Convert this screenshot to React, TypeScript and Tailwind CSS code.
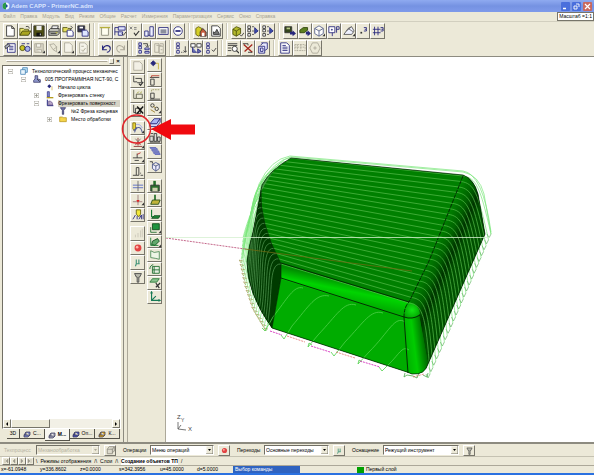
import React from 'react';

const NAVY = '#27277c';
const K = '#333333';
const GREY = '#aca899';

// 14x14 toolbar glyphs
const icons: Record<string, React.ReactNode> = {
  blank: <path d="M3 1h6l3 3v9H3zM9 1v3h3" fill="#fff" stroke={K} />,
  open: <><path d="M1 12V4h4l1 1h5v2" fill="#e9e46a" stroke="#55551a" /><path d="M1 12l3-5h10l-3 5z" fill="#a9a51f" stroke="#44440c" /><path d="M8 2c2-1 4 0 4 2" fill="none" stroke={K} /></>,
  save: <><path d="M1 1h12v12H1z" fill="#4e4e12" stroke={K} /><path d="M4 1h6v5H4z" fill="#eee" /><path d="M4 9h6v4H4z" fill="#111" /><path d="M8 10h1v2H8z" fill="#eee" /></>,
  print: <><path d="M4 5l1-4h7l-1 4" fill="#fff" stroke={K} /><path d="M1 6l2-2h10v6l-2 2H1z" fill="#bdbdb5" stroke={K} /><path d="M1 8h11M3 10h7" stroke={K} /><path d="M9 9h2" stroke="#c8c820" /></>,
  openCopy: <><path d="M1 3h5l1 1h3v4H1z" fill="#e5de59" stroke="#55551a" /><path d="M6 6h5l2 2v5H6z" fill="#fff" stroke={NAVY} /><path d="M10 1l2 2-2 2" fill="none" stroke={K} /></>,
  saveCopy: <><path d="M1 1h8v7H1z" fill="#35354f" stroke={K} /><path d="M3 2h4v2H3z" fill="#fff" /><path d="M6 6h5l2 2v5H6z" fill="#dfe6ff" stroke={NAVY} /></>,
  plane: <><path d="M3 3h8v9H3z" fill="#fffef0" stroke="#8a8a78" /><path d="M1 3h12" stroke="#b7b03c" strokeWidth="1.500" /></>,
  form: <><path d="M1 3v9M1 3h5M1 8h5" stroke={NAVY} fill="none" /><path d="M5 2h8v4H5zM5 8h5v4H5z" fill="#dfe3ff" stroke={NAVY} /><path d="M9 10l2 2 3-4" fill="none" stroke={K} /></>,
  calc: <><path d="M2 2l3 3M5 2L2 5M7 3h3M7 5h3" stroke="#777" /><path d="M7 9l2 3 4-5" fill="none" stroke={K} strokeWidth="1.4" /></>,
  bars: <path d="M2 7h4v6H2zM8 2h4v11H8zM6 12h2" fill="#eef1ff" stroke={NAVY} />,
  panel: <><path d="M2 3h11v8H2z" fill="#fff" stroke={NAVY} /><path d="M4 5h7v5H4z" fill="#8b8f9e" /></>,
  ring: <><circle cx="7" cy="7" r="5" fill="#fff" stroke={NAVY} /><path d="M4 7h6" stroke={NAVY} strokeWidth="2" /></>,
  houseBox: <><path d="M1 4l3-2 4 2v7L4 13l-3-2z" fill="#d5cf25" stroke="#66600b" /><path d="M6 8l3-4 4 4v5H6z" fill="#c55a3a" stroke={K} /><path d="M8 9h3v4H8z" fill="#fff" /></>,
  docChart: <><path d="M2 1h7l3 3v9H2z" fill="#fff" stroke={K} /><path d="M4 11V8l2 1 2-4 3 6z" fill="#777" stroke={K} /></>,
  box: <><path d="M1 5l4-3 5 2v6l-5 3-4-2z" fill="#b4b92c" stroke="#4d5209" /><path d="M1 5l4 2 5-3M5 7v6" fill="none" stroke="#4d5209" /><path d="M9 11l2 2 3-4" fill="none" stroke={K} /></>,
  listArrow: <><path d="M1 1h3v3H1zM1 5h3v3H1zM1 10h3v3H1z" fill="#fff" stroke={K} /><path d="M6 2h2M6 7h2M6 11h2" stroke={K} /><path d="M9 3v7l4-3z" fill="#3b4fae" stroke={NAVY} /></>,
  greenRight: <><path d="M1 2h8v7H1z" fill="#34451b" stroke={K} /><path d="M3 3h4v2H3z" fill="#b9c987" /><path d="M7 8h3V6l4 4-4 3v-2H7z" fill={NAVY} /></>,
  greenFlow: <><path d="M1 6l4-3h5v3l-4 3H1z" fill="#5c7f1e" stroke="#2f430c" /><path d="M8 8h2V6l4 4-4 3v-2H8z" fill={NAVY} /></>,
  cube: <><path d="M2 4l5-3 5 3v6l-5 3-5-3zM2 4l5 3 5-3M7 7v6" fill="#fff" stroke="#55608a" /><path d="M14 10v3h-3z" fill={K} /></>,
  pSquare: <><path d="M1 2h7v7H1z" fill="#fff" stroke={NAVY} /><path d="M4 5h1v1H4zM10 2v7M10 2h3v3h-3M5 9v4" fill="none" stroke={NAVY} /></>,
  shapes: <><path d="M1 11h9l3-4-3-5-4 2z" fill="#eef1ff" stroke="#555" /><path d="M4 7l6-5M6 4l6 4" fill="none" stroke="#666" /><path d="M14 10v3h-3z" fill={K} /></>,
  dots: <><path d="M4 8h2v2H4z" fill={K} /><path d="M8 3h3v2H9M11 5v2H8" fill="none" stroke={NAVY} /></>,
  grid: <path d="M3 2v10M7 2v10M1 5h9M1 9h9M10 3h3v2h-2M13 5v2h-3" fill="none" stroke={NAVY} />,
  props: <><path d="M4 2h9v10H4z" fill="#fff" stroke={NAVY} /><path d="M6 5h5M6 7h5M6 9h5" stroke={NAVY} /><path d="M1 5l4-3 2 2-5 4z" fill="#a9acbf" stroke={K} /></>,
  gears: <><circle cx="4" cy="7" r="3" fill="#c8c426" stroke="#4c4a0b" /><circle cx="10" cy="8" r="3" fill="#a9b4e8" stroke={NAVY} /><path d="M3 2h4M9 2h3" stroke={NAVY} /></>,
  saveOff: <><path d="M2 2h10v10H2z" fill="#d9d6c6" stroke={GREY} /><path d="M4 2h5v4H4zM4 9h6v3" fill="#f5f3ea" stroke={GREY} /><path d="M14 10v3h-3z" fill={K} /></>,
  flowOff: <><path d="M2 3l5-1 3 4-4 3zM6 9l5 3M10 5v6" fill="none" stroke={GREY} /><path d="M14 10v3h-3z" fill={K} /></>,
  pageOff: <><path d="M3 1h6l3 3v8H3z" fill="#f5f3e9" stroke={GREY} /><path d="M14 10v3h-3z" fill={K} /></>,
  pageOff2: <path d="M3 1h6l3 3v9H3zM5 9l2 2 3-4M5 5h3" fill="#f5f3e9" stroke={GREY} />,
  undo: <path d="M3 4v5h5M3 9c2-6 8-6 9-2 0 3-2 5-4 5" fill="none" stroke={NAVY} strokeWidth="1.3" />,
  redo: <path d="M11 4v5H6M11 9C9 3 3 3 2 7c0 3 2 5 4 5" fill="none" stroke={GREY} strokeWidth="1.2" />,
  treeMove: <><path d="M1 1h3v3H1zM1 5h3v3H1zM1 10h3v3H1zM8 7h5v2H8zM8 11h5v2H8z" fill="#dfe3ff" stroke={NAVY} /><path d="M6 2h5v3M9 4l2 2 2-2" fill="none" stroke={K} /></>,
  treeOff: <path d="M2 2h5v10H2zM7 5h5v8H7zM4 4h6M8 2h4v3M9 9h2" fill="none" stroke={GREY} />,
  tree: <><path d="M2 1h3v3H2zM2 5h3v3H2zM2 10h3v3H2z" fill="#fff" stroke={NAVY} /><path d="M7 12h1M9 12h1" stroke={K} /><path d="M12 5v7M10 10l2 2 2-2" fill="none" stroke={K} /></>,
  treeBox: <><path d="M1 2h5v4H1zM8 2h5v4H8z" fill="#fff" stroke={K} /><path d="M3 6v6h5M9 8v5l4-2z" fill="#6d76b8" stroke={NAVY} /></>,
  treeCheck: <><path d="M2 1h3v3H2zM2 5h3v3H2zM2 10h3v3H2z" fill="#fff" stroke={NAVY} /><path d="M8 9l2 2 3-4" fill="none" stroke={K} /></>,
  search: <><path d="M1 2h11M1 4h11M1 7h4M1 10h4" stroke={K} /><circle cx="9" cy="8" r="3" fill="#fff" stroke={K} /><path d="M11 10l3 3" stroke={K} strokeWidth="1.4" /></>,
  cutRed: <><path d="M2 3l10 9M12 3L3 11" stroke="#a4261d" strokeWidth="1.5" /><path d="M1 2h6v2M7 12h5" fill="none" stroke={K} /></>,
  layers: <path d="M5 1h7v7l-3 2M2 5h7v8H2zM4 4l3-3M4 7h3v4H4z" fill="#e8ebff" stroke={NAVY} />,
  layersOff: <path d="M5 1h8v7l-3 2M2 5h8v7H2zM2 5l3-4M10 5l3-4" fill="#dcd9cb" stroke="#77756a" />,
  doc: <><path d="M2 1h7l3 3v9H2z" fill="#fff" stroke={NAVY} /><path d="M4 4h4M4 6h6M4 8h6M4 10h6" stroke={NAVY} /></>,
  specOff: <path d="M1 3h12v7H1zM4 3v7M8 3v7M1 6h12" fill="none" stroke={GREY} strokeDasharray="2 1" />,
  hexOff: <path d="M4 1h6l3 6-3 6H4L1 7zM5 7h4M7 5v4" fill="none" stroke={GREY} />,
  // vertical column, left
  sheetOff: <path d="M2 2h7l3 3v7H2z" fill="#f2f0e5" stroke={GREY} />,
  pathCheck: <><path d="M2 1v7h4M4 4h7v5H6" fill="none" stroke={K} /><path d="M8 10l2 2 3-4" fill="none" stroke={K} strokeWidth="1.4" /></>,
  pathOpen: <><path d="M2 1v10h3M5 6h7v5H5z" fill="none" stroke="#555544" /><path d="M6 5l2-2M10 5l1-2" stroke="#9b9b34" /></>,
  pathDel: <><path d="M2 1v9h3M4 5h6v6H4z" fill="none" stroke={K} /><path d="M6 3l7 8M13 3l-7 8" stroke="#111" strokeWidth="1.6" /></>,
  millSurface: <><path d="M1 1h3v7L2.500 10 1 8z" fill="#f0dc3a" stroke="#7d6d10" /><path d="M2 10l4-4M3 12C5 5 10 4 12 12" fill="none" stroke="#555f9a" strokeWidth="1.2" /><path d="M5 3c4-1 6 2 7 4" fill="none" stroke="#8f9dea" /><path d="M14 10v3h-3z" fill={K} /></>,
  axisRed: <><path d="M7 1v9M2 11h10" stroke="#8b3030" /><path d="M4 2l6 7M10 2L4 9" stroke="#776a66" /><path d="M4 8h6" stroke="#c33" /><path d="M14 10v3h-3z" fill={K} /></>,
  lineTool: <><path d="M1 8h11M6 3v5M3 11h5" stroke={K} /><path d="M6 4l4-2" stroke="#bb2222" /><path d="M14 10v3h-3z" fill={K} /></>,
  profile: <path d="M1 12h4V3h3v9H5M10 12h3M10 9v1" fill="none" stroke={K} />,
  crossBlue: <><path d="M1 6h12M1 9h12" stroke="#4f65c3" /><path d="M7 1v12" stroke="#666" /></>,
  crossRed: <><path d="M7 1v12M1 9h11" stroke="#9c7a78" /><path d="M5 7l2 3 2-3z" fill="#d22" /><path d="M14 10v3h-3z" fill={K} /></>,
  toolYellow: <><path d="M5 1h5v5l-2 3-3-3z" fill="#f2e83a" stroke="#6a650d" /><path d="M1 12l3-5M6 12V8M8 12l3-5v5M13 6v6" stroke={NAVY} fill="none" /></>,
  stepsOff: <path d="M4 12V9M7 12V7M10 12V4M12 12V2" stroke="#c9c6b6" fill="none" />,
  ball: <><circle cx="7" cy="7" r="4" fill="#e24343" /><circle cx="6" cy="6" r="1.500" fill="#ffb4aa" /></>,
  mu: <path d="M5 4v5h3V4M5 9l-1 3M8 9h1" fill="none" stroke="#3f9378" strokeWidth="1.3" />,
  bit: <path d="M3 3h8L9 7H8v6H6V7H5z" fill="#b9b9ad" stroke="#444" />,
  // vertical column, right
  startPoint: <><path d="M5 2l3 3-3 3-3-3z" fill={NAVY} stroke={NAVY} /><path d="M8 5h3v7" fill="none" stroke="#c8b23c" /></>,
  contour: <><path d="M2 6v7h4V6zM1 4h11" fill="none" stroke={K} /><path d="M3 4V2h9" fill="none" stroke="#bb3a2a" /></>,
  contourDash: <><path d="M2 6v6h4V6zM1 13h12" fill="none" stroke={K} /><path d="M3 4V2h9" stroke="#996" strokeDasharray="2 1" fill="none" /></>,
  linkPts: <><circle cx="4" cy="4" r="2" fill="none" stroke={K} /><circle cx="9" cy="8" r="2" fill="none" stroke={K} /><path d="M5 5l3 2M2 9l5 3" stroke="#997a22" /><path d="M14 10v3h-3z" fill={K} /></>,
  slab: <><path d="M1 8l5-6h7l-4 6z" fill="#a9b6f2" stroke={NAVY} /><path d="M1 8v3h8l4-5V2L9 8H1" fill="#e4e8ff" stroke={NAVY} /></>,
  blocks: <path d="M1 6h4v6H1zM6 3h3v9H6zM10 7h3v5h-3zM2 3h3M1 13h12" fill="#dfdfd8" stroke={K} />,
  sheets: <path d="M1 3h7l2 2H3zM3 6h7l2 2H5zM5 9h7l1 2H7z" fill="#8089d4" stroke="#5a62b4" />,
  cubeGear: <><path d="M4 5l4-2 4 2v5l-4 3-4-3zM4 5l4 2 4-2M8 7v6" fill="#eef" stroke="#445080" /><path d="M1 2h3v2" fill="none" stroke={K} /></>,
  gSave: <><path d="M5 1h3v6H5z" fill="#25702a" /><path d="M2 6h10v7H2z" fill="#2c6e2d" stroke={K} /><path d="M4 9h6v4H4z" fill="#cfcfae" /></>,
  gOpen: <><path d="M6 1h2v6H6z" fill="#25702a" /><path d="M2 12l2-5h9l-2 5z" fill="#c1b43a" stroke="#234b14" /></>,
  gPlane: <><path d="M3 2v8l8 1" fill="none" stroke="#157a30" strokeWidth="1.300" /><path d="M3 12l3-3h7l-2 3z" fill="#1f8a36" stroke="#0d4a1a" /></>,
  gBox: <><path d="M4 2h8v7H4z" fill="#1f9440" stroke="#0d4a1a" /><path d="M2 6v6h7" fill="none" stroke="#1c6b2d" /><path d="M14 10v3h-3z" fill={K} /></>,
  gCyl: <><path d="M4 6l6-3 2 3-5 5-4-1z" fill="#62a96c" stroke="#0d4a1a" /><path d="M2 2v9h9" fill="none" stroke="#157a30" /><path d="M14 10v3h-3z" fill={K} /></>,
  gFace: <path d="M2 2l4 2 6-1v9l-4-1-6-1z" fill="#edf5e6" stroke="#4d8a57" />,
  gGrid: <path d="M4 4h8v8H4zM6 4v8M4 8h8M1 7c0-3 2-5 4-5" fill="#e6eee0" stroke="#1c6b2d" />,
  gTool: <><path d="M1 6l3-4h8L9 6z" fill="#8ac28e" stroke="#287636" /><path d="M8 12l5-5M8 7l4 6" stroke={K} strokeWidth="1.400" /></>,
  gAxes: <path d="M3 2v9h9M3 11l5-5M2 3l1-2 1 2M11 10l2 1-2 1" fill="none" stroke="#157a55" strokeWidth="1.300" />,
};

function Icon({ name }: { name: string }) {
  return (
    <svg viewBox="0 0 14 14" className="h-[12px] w-[12px] shrink-0" aria-hidden="true">
      {icons[name]}
    </svg>
  );
}

const raised = 'border border-t-white border-l-white border-r-[#77756a] border-b-[#77756a] bg-[#ece9d8]';
const sunken = 'border border-t-[#716f64] border-l-[#716f64] border-r-white border-b-white';

function ToolButton({ name }: { name: string }) {
  return (
    <button type="button" aria-label={name} className={`flex min-h-0 min-w-0 flex-1 items-center justify-center ${raised}`}>
      <Icon name={name} />
    </button>
  );
}

function Group({ names, width }: { names: string[]; width: string }) {
  return (
    <div className={`flex h-4 shrink-0 ${width}`}>
      {names.map((n, i) => <ToolButton key={i} name={n} />)}
    </div>
  );
}

function Column({ names, height }: { names: string[]; height: string }) {
  return (
    <div className={`flex w-[15px] shrink-0 flex-col ${height}`}>
      {names.map((n, i) => <ToolButton key={i} name={n} />)}
    </div>
  );
}

function Divider() {
  return <div className="mx-[3px] h-4 w-[2px] shrink-0 border-l border-[#c9c6b6] bg-white" />;
}

const toolbarTop = [
  { width: 'w-[87px]', names: ['blank', 'open', 'save', 'print', 'openCopy', 'saveCopy'] },
  { width: 'w-[87px]', names: ['plane', 'form', 'calc', 'bars', 'panel', 'ring'] },
  { width: 'w-[30px]', names: ['houseBox', 'docChart'] },
  { width: 'w-[44px]', names: ['box', 'listArrow', 'listArrow'] },
  { width: 'w-[102px]', names: ['greenRight', 'greenFlow', 'cube', 'pSquare', 'shapes', 'dots', 'grid'] },
];

const toolbarBottom = [
  { width: 'w-[87px]', names: ['props', 'gears', 'saveOff', 'flowOff', 'pageOff', 'pageOff2'] },
  { width: 'w-[30px]', names: ['undo', 'redo'] },
  { width: 'w-[30px]', names: ['treeMove', 'treeOff'] },
  { width: 'w-[44px]', names: ['tree', 'treeBox', 'treeCheck'] },
  { width: 'w-[44px]', names: ['search', 'cutRed', 'layers'] },
  { width: 'w-[44px]', names: ['doc', 'specOff', 'hexOff'] },
];

function Toolbar({ groups }: { groups: { width: string; names: string[] }[] }) {
  return (
    <div className="flex h-[17px] items-center pl-[3px]">
      {groups.map((g, i) => (
        <React.Fragment key={i}>
          {i > 0 && <Divider />}
          <Group names={g.names} width={g.width} />
        </React.Fragment>
      ))}
    </div>
  );
}

const treeIcons: Record<string, React.ReactNode> = {
  process: <><path d="M4 1h7v7H4z" fill="#bfe3f7" stroke="#2b6fa8" /><path d="M1 4h7v7H1z" fill="#e7f4fc" stroke="#2b6fa8" /></>,
  machine: <><path d="M3 1h4v5l4 1v4H1V8l2-2z" fill="#8b93c8" stroke="#2b2b5c" /><path d="M6 6l4 4" stroke="#222" /></>,
  start: <><path d="M5 2l3 3-3 3-3-3z" fill={NAVY} /><path d="M9 5v6" stroke="#c9a92c" /></>,
  wall: <><path d="M2 1h3v8H2z" fill="#8a8fd0" stroke={NAVY} /><path d="M1 10h10" stroke="#b59b1e" strokeWidth="2" /></>,
  surface: <><path d="M2 1v9h9" fill="none" stroke={NAVY} strokeWidth="1.500" /><path d="M4 3c4 0 6 2 6 6H4z" fill="#b6a6c8" stroke="#634d86" /></>,
  cutter: <path d="M2 1h8L7 5v6H5V5z" fill="#7378a8" stroke="#2b2b5c" />,
  folder: <path d="M1 3h4l1 1h5v6H1z" fill="#f5d54b" stroke="#b08d14" />,
};

const tree = [
  { pad: 'pl-[5px]', sign: '−', icon: 'process', text: 'Технологический процесс механичес' },
  { pad: 'pl-[18px]', sign: '−', icon: 'machine', text: '005 ПРОГРАММНАЯ NCT-90, С' },
  { pad: 'pl-[31px]', sign: '', icon: 'start', text: 'Начало цикла' },
  { pad: 'pl-[31px]', sign: '+', icon: 'wall', text: 'Фрезеровать стенку' },
  { pad: 'pl-[31px]', sign: '−', icon: 'surface', text: 'Фрезеровать поверхност', selected: true },
  { pad: 'pl-[44px]', sign: '', icon: 'cutter', text: '№2 Фреза концевая' },
  { pad: 'pl-[44px]', sign: '+', icon: 'folder', text: 'Место обработки' },
];

function ProcessTree() {
  return (
    <ul className="mt-px flex h-[53px] flex-col">
      {tree.map((row) => (
        <li key={row.text} className={`flex flex-1 items-center gap-1 ${row.pad}`}>
          <svg viewBox="0 0 5 5" className="h-[5px] w-[5px] shrink-0" aria-hidden="true">
            {row.sign && <path d={row.sign === '+' ? 'M0 0h5v5H0zM1 2.500h3M2.500 1v3' : 'M0 0h5v5H0zM1 2.500h3'} fill="#fff" stroke="#8d8b80" strokeWidth=".7" />}
          </svg>
          <svg viewBox="0 0 12 12" className="ml-[3px] h-2 w-2 shrink-0" aria-hidden="true">{treeIcons[row.icon]}</svg>
          <span className={row.selected ? 'flex-1 bg-[#d6d3c6]' : ''}>{row.text}</span>
        </li>
      ))}
    </ul>
  );
}

const sideTabs = [
  { label: '3D', color: '' },
  { label: 'С...', color: '#7b86c9' },
  { label: 'М...', color: '#a4a4b8', active: true },
  { label: 'Оп...', color: '#4e55b4' },
  { label: 'К...', color: '#e0a91c' },
];

function SidePanel() {
  return (
    <aside className="flex w-[124px] shrink-0 flex-col border-r border-[#8d8b80] px-[2px] pb-px">
      <div className="flex h-2 items-center gap-px pl-1">
        <div className="h-[2px] flex-1 border border-white border-b-[#aca899]" />
        <button type="button" aria-label="Свернуть" className={`h-[6px] w-[5px] ${raised}`} />
        <button type="button" aria-label="Закрыть" className="h-[6px] w-[6px] text-center text-[6px] leading-[6px] font-bold">×</button>
      </div>
      <div className={`flex min-h-0 flex-1 flex-col overflow-hidden bg-white whitespace-nowrap ${sunken}`}>
        <ProcessTree />
        <div className="mt-auto flex h-[9px] items-center justify-between bg-[#f2f0e6]">
          <button type="button" aria-label="Влево" className={`flex h-[9px] w-2 items-center justify-center ${raised}`}>
            <svg viewBox="0 0 4 4" className="h-1 w-1"><path d="M3 0v4L1 2z" /></svg>
          </button>
          <div className={`h-[9px] w-[39px] ${raised}`} />
          <div className="flex-1" />
          <button type="button" aria-label="Вправо" className={`flex h-[9px] w-2 items-center justify-center ${raised}`}>
            <svg viewBox="0 0 4 4" className="h-1 w-1"><path d="M1 0v4l2-2z" /></svg>
          </button>
        </div>
      </div>
      <div className="flex h-3 items-start pl-[5px]" role="tablist">
        {sideTabs.map((t) => (
          <button
            key={t.label}
            type="button"
            role="tab"
            aria-selected={!!t.active}
            className={`flex items-center justify-center gap-[2px] border-r border-b border-[#55534a] ${t.color ? 'w-[25px]' : 'w-[13px]'} ${t.active ? 'h-3 bg-[#f8f7f1] font-bold' : 'h-[10px]'}`}
          >
            {t.color && (
              <svg viewBox="0 0 8 8" className="h-2 w-2" aria-hidden="true">
                <path d="M1 5l2-3h4v3L5 7H1zM3 2v3h4M1 5h2" fill={t.color} stroke="#333355" strokeWidth=".7" />
              </svg>
            )}
            {t.label}
          </button>
        ))}
      </div>
    </aside>
  );
}

type Pt = [number, number];

// point on a polyline, t in 0..1
function along(pts: Pt[], t: number): Pt {
  const f = t * (pts.length - 1);
  const i = Math.min(Math.floor(f), pts.length - 2);
  const k = f - i;
  return [pts[i][0] + (pts[i + 1][0] - pts[i][0]) * k, pts[i][1] + (pts[i + 1][1] - pts[i][1]) * k];
}

const leftEdge: Pt[] = [[290, 158], [272, 172], [263, 186], [261, 205], [265, 225], [272, 244], [281, 264]];
const seam: Pt[] = [[463, 176], [447, 218], [429, 261], [409, 303]];
const leftOuter: Pt[] = [[243, 238], [241, 262], [246, 287], [254, 311], [266, 331]];
const rightOuter: Pt[] = [[491, 234], [472, 279], [452, 325], [430, 374]];

const PASSES = 24;
const passes = Array.from({ length: PASSES }, (_, i) => {
  const t = i / (PASSES - 1);
  const l = along(leftEdge, t);
  const s = along(seam, t);
  const o = along(leftOuter, t);
  const r = along(rightOuter, t);
  return {
    top: `M${l[0]} ${l[1]}L${s[0]} ${s[1]}C${s[0] + 13} ${s[1] + 2} ${s[0] + 17} ${s[1] + 10} ${r[0]} ${r[1]}`,
    left: `M${l[0]} ${l[1]}C${l[0] - 14} ${l[1] - 1} ${o[0] + 8} ${o[1] - 34} ${o[0]} ${o[1]}`,
    end: o,
    rightEnd: r,
  };
});

const frontPasses = [
  'M303 288C294 285 287 299 273 317L265 331l-3-3',
  'M329 296C316 293 309 306 292 326L284 339l-3-4',
  'M356 305C344 301 337 315 318 335L308 347l1-4 3 2',
  'M383 313C371 309 364 322 345 342L334 356l-3-4',
  'M405 322C395 315 389 332 369 352L358 364l1-4 3 2',
  'M409 350C402 345 399 355 387 366L382 371l-3-4',
];

const body = 'M291 158L463 175Q474 179 478 194L485 234L428 364Q425 375 412 374L407 372L272 328Q247 293 247 262Q249 245 253 232L262 185Q270 170 291 158Z';

function Viewport() {
  return (
    <svg viewBox="166 57 428 384" preserveAspectRatio="xMinYMin meet" className="h-full w-full" role="img" aria-label="Траектория обработки">
      <defs>
        <linearGradient id="side" gradientUnits="userSpaceOnUse" x1="432" y1="248" x2="457" y2="259">
          <stop offset="0" stopColor="#008400" />
          <stop offset=".45" stopColor="#006200" />
          <stop offset=".75" stopColor="#003500" />
          <stop offset="1" stopColor="#005000" />
        </linearGradient>
        <linearGradient id="fillet" gradientUnits="userSpaceOnUse" x1="345" y1="280" x2="341" y2="300">
          <stop offset="0" stopColor="#008e00" />
          <stop offset=".5" stopColor="#00d400" />
          <stop offset="1" stopColor="#00b000" />
        </linearGradient>
        <linearGradient id="corner" gradientUnits="userSpaceOnUse" x1="404" y1="340" x2="428" y2="337">
          <stop offset="0" stopColor="#00b000" />
          <stop offset=".4" stopColor="#00cc00" />
          <stop offset="1" stopColor="#004a00" />
        </linearGradient>
        <radialGradient id="ball" cx="50%" cy="50%" r="60%">
          <stop offset="0" stopColor="#14e614" />
          <stop offset="1" stopColor="#00a000" />
        </radialGradient>
        <clipPath id="bodyClip"><path d={body} /></clipPath>
      </defs>
      {/* passes that leave the part */}
      <g fill="none" stroke="#7be67b" strokeWidth=".7">
        {passes.map((p, i) => <path key={i} d={p.top + p.left} />)}
        {passes.map((p, i) => <path key={`r${i}`} d={`M${p.rightEnd[0]} ${p.rightEnd[1]}l-2 4l-2-4`} stroke="#66b866" />)}
        {passes.filter((_, i) => i > 5).map((p, i) => <path key={`l${i}`} d={`M${p.end[0]} ${p.end[1]}l-2-3l4 1`} stroke="#a09a50" />)}
        <path d="M246 262Q249 245 253 225L262 182Q274 161 291 157L463 172Q479 175 484 194L491 234" />
        <path d="M243 258Q244 236 259 184Q271 159 290 156L463 171Q483 174 491 232" />
      </g>
      {/* solid */}
      <path d={body} fill="#008000" />
      <path d="M261 190Q259 222 281 264L281 278L272 328Q247 293 247 262Q249 245 253 232Z" fill="#003b00" />
      <path d="M463 175Q474 179 478 194L485 234L428 364L419 314L409 303L429 261Z" fill="url(#side)" />
      <path d="M281 278L405 317L407 372L272 328Z" fill="#00ac00" />
      <path d="M281 263L409 302L404 318L281 279Z" fill="url(#fillet)" />
      <path d="M404 317L419 315L428 364Q425 375 412 374L407 372Z" fill="url(#corner)" />
      <path d="M409 302Q419 304 420 314Q412 320 404 317Q404 307 409 302Z" fill="url(#ball)" />
      <g clipPath="url(#bodyClip)" fill="none" strokeWidth=".7">
        {passes.map((p, i) => <path key={i} d={p.top} stroke="#58bd4c" />)}
        {passes.map((p, i) => <path key={`l${i}`} d={p.left} stroke="#559955" />)}
      </g>
      <g fill="none" stroke="#4fd04a" strokeWidth=".8">
        {frontPasses.map((d) => <path key={d} d={d} />)}
        <path d="M405 373l-1 4 3-2 6 1 4 2 2-5M423 375l4 2 1-4" stroke="#4caa4c" />
      </g>
      {/* edges */}
      <g fill="none" stroke="#032003" strokeWidth=".9">
        <path d={body} strokeWidth=".7" />
        <path d="M281 263L409 302M281 278L404 317Q412 320 420 315M404 317L408 373" />
        <path d="M463 176L429 261L409 302Q404 307 404 317" strokeDasharray="4 1" />
        <path d="M261 190Q259 222 281 264L281 278L272 328" strokeWidth=".6" />
      </g>
      <path d="M270 331L282 335M311 346L330 352M360 361L380 367" stroke="#d943c4" strokeDasharray="2 1" fill="none" />
      <path d="M287 336L305 342M336 352L355 358M413 377L424 374" stroke="#e05a5a" strokeDasharray="2 1" strokeWidth=".7" fill="none" />
      <path d="M166 238L245 249" stroke="#b5406c" strokeDasharray="2 1" strokeWidth=".8" />
      <path d="M245 249L412 271" stroke="#6d6a12" strokeWidth=".8" />
      <path d="M166 237.500H490" stroke="#d5f0d0" strokeWidth=".8" />
      {/* axes */}
      <path d="M178 422v7l8 1M178 429l3-4" stroke="#555" strokeWidth=".8" fill="none" />
      <g fill="#444" fontSize="6" fontFamily="Liberation Sans, sans-serif">
        <text x="177" y="419">Z</text>
        <text x="181" y="422" fontSize="5">Y</text>
        <text x="188" y="431">X</text>
      </g>
    </svg>
  );
}

const menu = ['Файл', 'Правка', 'Модуль', 'Вид', 'Режим', 'Общие', 'Расчет', 'Измерения', 'Параметризация', 'Сервис', 'Окно', 'Справка'];

const fields = [
  { id: 'process', label: 'Техпроцесс', value: 'Механообработка', icon: 'layersOff', labelW: 'w-8', selectW: 'w-[64px]', disabled: true },
  { id: 'operation', label: 'Операции', value: 'Меню операций', icon: 'ball', labelW: 'w-[27px]', selectW: 'w-[64px]' },
  { id: 'step', label: 'Переходы', value: 'Основные переходы', icon: 'mu', labelW: 'w-[27px]', selectW: 'w-[65px]' },
  { id: 'equip', label: 'Оснащение', value: 'Режущий инструмент', icon: 'bit', labelW: 'w-[31px]', selectW: 'w-[76px]' },
];

function FieldBar() {
  return (
    <div className="flex h-3 items-center gap-[7px] pl-1">
      {fields.map((f) => (
        <div key={f.id} className={`flex shrink-0 items-center ${f.disabled ? 'text-[#b5b2a2]' : ''}`}>
          <label htmlFor={f.id} className={`whitespace-nowrap ${f.labelW}`}>{f.label}</label>
          <div className={`relative h-[10px] ${f.selectW} ${sunken} ${f.disabled ? 'bg-[#ece9d8]' : 'bg-white'}`}>
            <select id={f.id} disabled={f.disabled} className="block h-2 w-full appearance-none bg-transparent pl-px leading-[8px]">
              <option>{f.value}</option>
            </select>
            <svg viewBox="0 0 7 8" className="pointer-events-none absolute top-0 right-0 h-2 w-[7px] bg-[#ece9d8]" aria-hidden="true">
              <path d="M0 8V0h7" fill="none" stroke="#fff" />
              <path d="M7 0v8H0" fill="none" stroke="#77756a" />
              <path d="M2 3h3L3.500 5z" fill={f.disabled ? '#aca899' : '#000'} />
            </svg>
          </div>
          <button type="button" aria-label={`${f.label}: открыть`} className={`ml-1 flex h-[11px] w-3 items-center justify-center ${raised}`}>
            <svg viewBox="0 0 14 14" className="h-[9px] w-[9px]" aria-hidden="true">{icons[f.icon]}</svg>
          </button>
        </div>
      ))}
    </div>
  );
}

const navArrows = ['M2 1v4M5 1v4L3 3z', 'M4 1v4L2 3z', 'M2 1v4l2-2z', 'M1 1v4l2-2zM4 1v4'];

function SheetTabs() {
  return (
    <div className="flex h-[9px] items-center border-t border-[#c5c2b2] pl-[2px]">
      {navArrows.map((d) => (
        <button key={d} type="button" aria-label="Листать" className={`flex h-2 w-2 items-center justify-center ${raised}`}>
          <svg viewBox="0 0 6 6" className="h-[6px] w-[6px]"><path d={d} fill="#99968a" stroke="#99968a" strokeWidth=".5" /></svg>
        </button>
      ))}
      <div className="flex items-center gap-[3px] pl-[2px] whitespace-nowrap" role="tablist">
        <span>\</span>
        <button type="button" role="tab">Режимы отображения</button>
        <span>/\</span>
        <button type="button" role="tab">Слои</button>
        <span>/\</span>
        <button type="button" role="tab" aria-selected="true" className="bg-white font-bold text-black">Создание объектов ТП</button>
        <span>/</span>
      </div>
    </div>
  );
}

const coords = [
  { text: 'x=-61.0948', w: 'w-[39px]' },
  { text: 'y=336.8602', w: 'w-10' },
  { text: 'z=0.0000', w: 'w-[39px]' },
  { text: 's=342.3956', w: 'w-[41px]' },
  { text: 'u=45.0000', w: 'w-[37px]' },
  { text: 'd=5.0000', w: 'w-9' },
];

export default function App() {
  return (
    <div className="flex h-screen flex-col overflow-hidden bg-[#ece9d8] font-['Liberation_Sans',sans-serif] text-[5px] leading-[7px] text-black">
      <header className="flex h-3 shrink-0 items-center bg-linear-to-b from-[#8faaf0] via-[#7592e2] to-[#7f9bea] px-[2px] text-[6px] font-bold text-[#dbe6ff]">
        <svg viewBox="0 0 8 8" className="mr-px h-2 w-2" aria-hidden="true">
          <circle cx="4" cy="4" r="3.500" fill="#e8f4ff" />
          <path d="M4 .5a3.500 3.500 0 000 7z" fill="#2a9a4a" />
          <path d="M4 2l2 2-2 2z" fill="#1d3fa0" />
        </svg>
        <h1>Adem CAPP - PrimerNC.adm</h1>
        <div className="ml-auto flex gap-[2px]">
          <button type="button" aria-label="Свернуть окно" className="h-[9px] w-[9px] rounded-[1px] bg-[#4a6fdc]">
            <svg viewBox="0 0 9 9"><path d="M2 6.500h3" stroke="#fff" strokeWidth="1.500" /></svg>
          </button>
          <button type="button" aria-label="Восстановить" className="h-[9px] w-[9px] rounded-[1px] bg-[#4a6fdc]">
            <svg viewBox="0 0 9 9"><path d="M4 2h3v3M2 4h3v3H2z" fill="none" stroke="#fff" strokeWidth=".9" /></svg>
          </button>
          <button type="button" aria-label="Закрыть окно" className="h-[9px] w-[9px] rounded-[1px] bg-[#c9695f]">
            <svg viewBox="0 0 9 9"><path d="M2 2l5 5M7 2L2 7" stroke="#fff" strokeWidth="1.200" /></svg>
          </button>
        </div>
      </header>

      <nav className="flex h-[10px] shrink-0 items-center gap-[5px] border-b border-[#d2cfbf] pl-[3px] text-[#a5a292]">
        {menu.map((m) => <button key={m} type="button">{m}</button>)}
        <span className="ml-auto border border-[#77756a] bg-white px-px text-black">Масштаб =1:1</span>
      </nav>

      <Toolbar groups={toolbarTop} />
      <Toolbar groups={toolbarBottom} />

      <main className="relative flex min-h-0 flex-1 border-t border-[#8d8b80]">
        <SidePanel />
        <div className="flex shrink-0 border-r border-[#aca899] pl-[3px]">
          <div className="flex w-[19px] flex-col gap-1 border-l border-[#aca899] pt-[2px] pl-[2px]">
            <Column height="h-[58px]" names={['sheetOff', 'pathCheck', 'pathOpen', 'pathDel']} />
            <Column height="h-[101px]" names={['millSurface', 'axisRed', 'lineTool', 'profile', 'crossBlue', 'crossRed', 'toolYellow']} />
            <Column height="h-[58px]" names={['stepsOff', 'ball', 'mu', 'bit']} />
          </div>
          <div className="flex w-[19px] flex-col gap-[6px] pt-px pl-px">
            <Column height="h-[115px]" names={['startPoint', 'contour', 'contourDash', 'linkPts', 'slab', 'blocks', 'sheets', 'cubeGear']} />
            <Column height="h-[125px]" names={['gSave', 'gOpen', 'gPlane', 'gBox', 'gCyl', 'gFace', 'gGrid', 'gTool', 'gAxes']} />
          </div>
        </div>
        <div className="min-w-0 flex-1 bg-white">
          <Viewport />
        </div>
        {/* callout over the surface milling button */}
        <svg viewBox="0 0 80 36" className="pointer-events-none absolute top-[54px] left-[120px] h-9 w-20" aria-hidden="true">
          <circle cx="16.500" cy="18" r="14" fill="none" stroke="#e3262c" strokeWidth="1.500" />
          <path d="M31 18L51 8v5.500h24v10H51V29z" fill="#f00a0f" />
        </svg>
      </main>

      <footer className="shrink-0 border-t-2 border-[#8d8b80]">
        <FieldBar />
        <SheetTabs />
        <div className="flex h-2 items-center border-t border-[#aca899] pl-px whitespace-nowrap">
          {coords.map((c) => <span key={c.text} className={`shrink-0 ${c.w}`}>{c.text}</span>)}
          <span className="h-[7px] w-[67px] bg-[#2f63c0] pl-[2px] text-white">Выбор команды</span>
          <span className="mr-[2px] ml-[57px] h-[6px] w-[7px] bg-[#00a000]" />
          <span>Первый слой</span>
        </div>
        <div className="h-[2px] bg-[#2b71e0]" />
      </footer>
    </div>
  );
}
